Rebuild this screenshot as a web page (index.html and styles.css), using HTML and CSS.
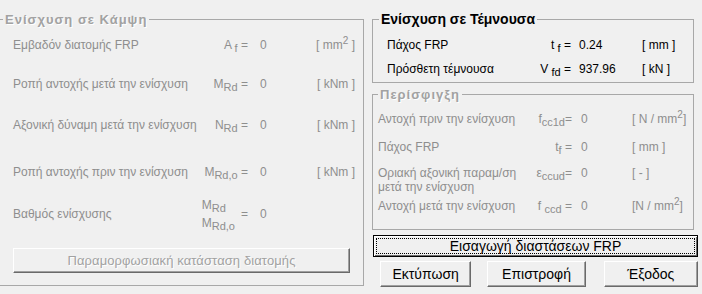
FILE: index.html
```html
<!DOCTYPE html>
<html lang="el">
<head>
    <meta charset="UTF-8">
    <title>Ενίσχυση FRP</title>
    <link rel="stylesheet" href="styles.css">
</head>
<body>
<main class="window">
  <fieldset class="group bending">
    <legend class="etched">Ενίσχυση σε Κάμψη</legend>
    <div class="row r1">
      <span class="label">Εμβαδόν διατομής FRP</span>
      <span class="sym">A <sub>f</sub> =</span>
      <span class="val">0</span>
      <span class="unit">[ mm<sup>2</sup> ]</span>
    </div>
    <div class="row r2">
      <span class="label">Ροπή αντοχής μετά την ενίσχυση</span>
      <span class="sym">M<sub>Rd</sub> =</span>
      <span class="val">0</span>
      <span class="unit">[ kNm ]</span>
    </div>
    <div class="row r3">
      <span class="label">Αξονική δύναμη μετά την ενίσχυση</span>
      <span class="sym">N<sub>Rd</sub> =</span>
      <span class="val">0</span>
      <span class="unit">[ kNm ]</span>
    </div>
    <div class="row r4">
      <span class="label">Ροπή αντοχής πριν την ενίσχυση</span>
      <span class="sym">M<sub>Rd,o</sub> =</span>
      <span class="val">0</span>
      <span class="unit">[ kNm ]</span>
    </div>
    <div class="row r5">
      <span class="label">Βαθμός ενίσχυσης</span>
      <span class="sym frac">
        <span class="fr">
          <span>M<sub>Rd</sub></span>
          <span>M<sub>Rd,o</sub></span>
        </span>
        =
      </span>
      <span class="val">0</span>
      <span class="unit"></span>
    </div>
    <button class="btn wide" disabled>Παραμορφωσιακή κατάσταση διατομής</button>
  </fieldset>

  <div class="side">
    <fieldset class="group shear">
      <legend>Ενίσχυση σε Τέμνουσα</legend>
      <div class="row">
        <span class="label">Πάχος FRP</span>
        <span class="sym">t <sub>f</sub> =</span>
        <span class="val">0.24</span>
        <span class="unit">[ mm ]</span>
      </div>
      <div class="row">
        <span class="label">Πρόσθετη τέμνουσα</span>
        <span class="sym">V <sub>fd</sub> =</span>
        <span class="val">937.96</span>
        <span class="unit">[ kN ]</span>
      </div>
    </fieldset>

    <fieldset class="group confine">
      <legend class="etched">Περίσφιγξη</legend>
      <div class="row c1">
        <span class="label">Αντοχή πριν την ενίσχυση</span>
        <span class="sym">f<sub>cc1d</sub>=</span>
        <span class="val">0</span>
        <span class="unit">[ N / mm<sup>2</sup>]</span>
      </div>
      <div class="row c2">
        <span class="label">Πάχος FRP</span>
        <span class="sym">t<sub>f</sub> =</span>
        <span class="val">0</span>
        <span class="unit">[ mm ]</span>
      </div>
      <div class="row c3">
        <span class="label">Οριακή αξονική παραμ/ση<br>μετά την ενίσχυση</span>
        <span class="sym">ε<sub>ccud</sub>=</span>
        <span class="val">0</span>
        <span class="unit">[ - ]</span>
      </div>
      <div class="row c4">
        <span class="label">Αντοχή μετά την ενίσχυση</span>
        <span class="sym">f <sub>ccd</sub> =</span>
        <span class="val">0</span>
        <span class="unit">[N / mm<sup>2</sup>]</span>
      </div>
    </fieldset>

    <button class="btn default">Εισαγωγή διαστάσεων FRP</button>

    <div class="actions">
      <button class="btn print">Εκτύπωση</button>
      <button class="btn back">Επιστροφή</button>
      <button class="btn exit">Έξοδος</button>
    </div>
  </div>
</main>
</body>
</html>
```

FILE: styles.css
```css
*{
  margin: 0;
  padding: 0;
  box-sizing: border-box;
}

body{
  background-color: #f0f0f0;
  font-family: "Liberation Sans", Arial, sans-serif;
  font-size: 12px;
  color: #000;
  overflow: hidden;
}

.window{
  display: flex;
  align-items: flex-start;
  padding-top: 11px;
}

/* group boxes */
.group{
  border: 1px solid #a8a8a8;
}
.group legend{
  line-height: 17px;
  padding: 0 2px;
  font-weight: bold;
  font-size: 14px;
}
.group legend.etched{
  font-size: 13px;
  letter-spacing: 1px;
  color: #a2a2a2;
  text-shadow: 1px 1px 0 #fff;
}

sub{
  font-size: 11px;
  vertical-align: -3px;
  line-height: 0;
}
sup{
  font-size: 10px;
  vertical-align: 5px;
  line-height: 0;
}

.row{
  display: grid;
  align-items: center;
  line-height: 16px;
}
.sym{
  text-align: right;
  white-space: nowrap;
}

/* bending (left) */
.bending{
  width: 370px;
  margin-left: -6px;
  padding: 0 8px 12px 8px;
  color: #8e8e8e;
}
.bending .row{
  grid-template-columns: 187px 48px 52px 55px;
  padding-left: 10px;
}
.bending .val{
  padding-left: 12px;
}
.bending .unit{
  text-align: right;
}
.r1{ margin-top: 9px; }
.r2{ margin-top: 23px; }
.r3{ margin-top: 25px; }
.r4{ margin-top: 31px; }
.r5{ margin-top: 16px; }

.frac{
  display: flex;
  align-items: center;
  justify-content: flex-end;
  gap: 6px;
}
.fr{
  display: flex;
  flex-direction: column;
  text-align: left;
  line-height: 18px;
}

/* right column */
.side{
  margin-left: 8px;
  width: 326px;
}
.shear{
  width: 322px;
  padding: 5px 6px 1px 6px;
}
.shear .row{
  grid-template-columns: 130px 54px 71px auto;
  line-height: 24px;
  padding-left: 8px;
}
.shear .val{
  padding-left: 8px;
}

.confine{
  width: 322px;
  margin-top: 3px;
  padding: 9px 6px 16px 5px;
  color: #8e8e8e;
}
.confine .row{
  grid-template-columns: 150px 44px 60px auto;
  line-height: 14px;
}
.confine .val{
  padding-left: 9px;
}
.c2{ margin-top: 14px; }
.c3{ margin-top: 12px; align-items: start; }
.c4{ margin-top: 5px; }

/* buttons */
.btn{
  display: block;
  font-family: inherit;
  font-size: 14px;
  background-color: #f0f0f0;
  color: #000;
  border: 1px solid;
  border-color: #fff #6a6a6a #6a6a6a #fff;
  box-shadow: inset -1px -1px 0 #a0a0a0;
}
.wide{
  width: 337px;
  height: 25px;
  margin: 16px 0 0 10px;
  font-size: 13px;
  letter-spacing: 0.1px;
  color: #a2a2a2;
  text-shadow: 1px 1px 0 #fff;
}
.default{
  width: 325px;
  height: 22px;
  margin: 5px 0 0 1px;
  border: 1px solid #000;
  box-shadow: inset 1px 1px 0 #fff, inset -1px -1px 0 #6a6a6a;
  outline: 1px dotted #000;
  outline-offset: -4px;
}
.actions{
  display: flex;
  margin: 4px 0 0 8px;
}
.actions .btn{
  height: 26px;
}
.print{ width: 92px; }
.back{ width: 99px; margin-left: 16px; }
.exit{ width: 95px; margin-left: 18px; }
```
